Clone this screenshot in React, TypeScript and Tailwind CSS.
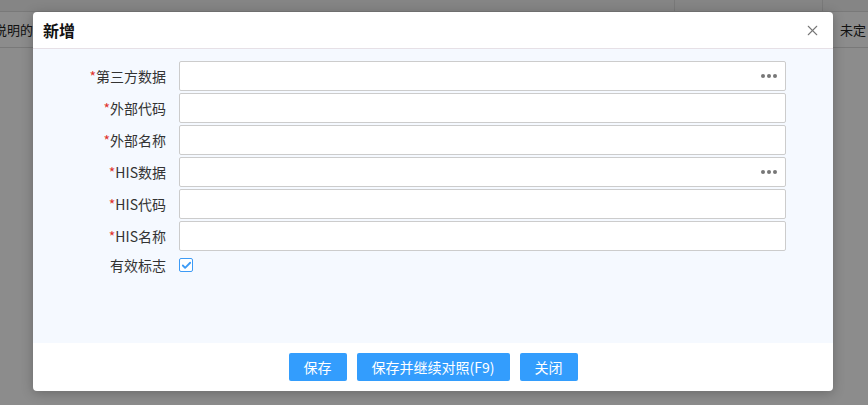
import { Check, X } from "lucide-react";

const font = { fontFamily: '"Noto Sans CJK SC", "Noto Sans", sans-serif' };

type Field = { label: string; picker?: boolean };

const fields: Field[] = [
  { label: "第三方数据", picker: true },
  { label: "外部代码" },
  { label: "外部名称" },
  { label: "HIS数据", picker: true },
  { label: "HIS代码" },
  { label: "HIS名称" },
];

function Dots() {
  return (
    <span className="absolute right-[8px] top-1/2 flex -translate-y-1/2 gap-[2px]">
      <i className="block size-[4px] rounded-full bg-[#777]" />
      <i className="block size-[4px] rounded-full bg-[#777]" />
      <i className="block size-[4px] rounded-full bg-[#777]" />
    </span>
  );
}

export default function App() {
  return (
    <div className="relative h-[405px] w-[868px] overflow-hidden bg-white text-[#222]" style={font}>
      {/* grid rows behind the dialog */}
      <div className="flex h-[12px] border-b border-[#ddd] bg-[#f2f2f2]">
        <div className="w-[675px] border-r border-[#ddd]" />
        <div className="w-[148px] border-r border-[#ddd]" />
      </div>
      <div className="flex h-[36px] items-center justify-between border-b border-[#ddd] text-[13px]">
        <span className="-ml-[6px]">说明的</span>
        <span className="mr-[2px]">未定</span>
      </div>

      <div className="absolute inset-0 bg-black/45" />

      <div className="absolute left-[33px] top-[12px] flex h-[379px] w-[800px] flex-col overflow-hidden rounded-[4px] bg-white shadow-[0_2px_12px_rgba(0,0,0,0.25)]">
        <div className="flex h-[37px] shrink-0 items-center justify-between border-b border-[#e6e0e6] pl-[10px] pr-[12px]">
          <span className="text-[16px] font-bold text-[#111]">新增</span>
          <X size={17} strokeWidth={1.5} className="text-[#777]" />
        </div>

        <div className="flex-1 bg-[#f5f9ff] pt-[12px]">
          <div className="grid grid-cols-[133px_607px] gap-x-[13px] gap-y-[2px]">
            {fields.map((f) => (
              <div key={f.label} className="contents">
                <label className="flex h-[30px] items-center justify-end text-[14px] text-[#333]">
                  <span className="text-[#e0332d]">*</span>
                  {f.label}
                </label>
                <div className="relative h-[30px] rounded-[2px] border border-[#ccc] bg-white">
                  {f.picker && <Dots />}
                </div>
              </div>
            ))}
            <label className="flex h-[24px] items-center justify-end text-[14px] text-[#333]">有效标志</label>
            <div className="flex h-[24px] items-center">
              <span className="flex size-[14px] items-center justify-center rounded-[2px] border border-[#3d9bf6] bg-white">
                <Check size={11} strokeWidth={4} className="text-[#3d9bf6]" />
              </span>
            </div>
          </div>
        </div>

        <div className="flex h-[48px] shrink-0 items-center justify-center gap-[10px]">
          <button className="h-[28px] w-[58px] rounded-[2px] bg-[#339dfd] text-[14px] text-white">保存</button>
          <button className="h-[28px] w-[153px] rounded-[2px] bg-[#339dfd] text-[14px] text-white">保存并继续对照(F9)</button>
          <button className="h-[28px] w-[58px] rounded-[2px] bg-[#339dfd] text-[14px] text-white">关闭</button>
        </div>
      </div>
    </div>
  );
}
